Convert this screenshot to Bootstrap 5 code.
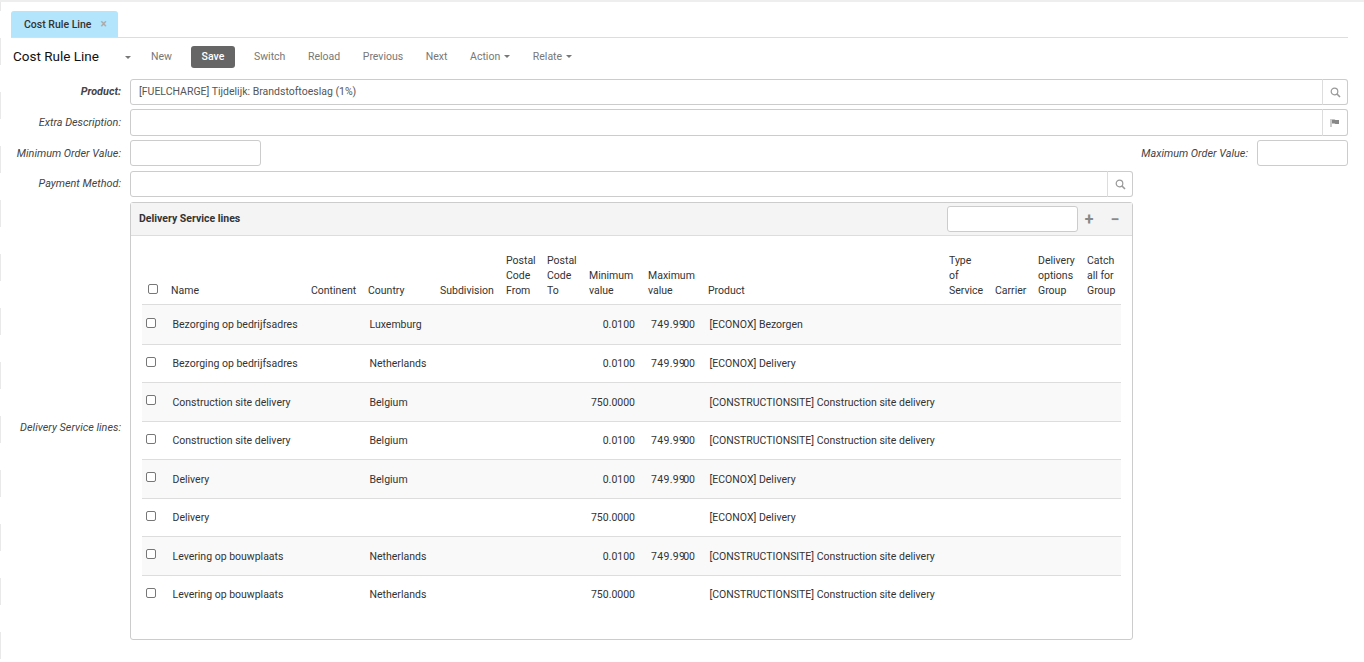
<!DOCTYPE html>
<html lang="en">
<head>
  <meta charset="UTF-8">
  <title>Cost Rule Line</title>
  <link href="https://cdn.jsdelivr.net/npm/bootstrap@5.3.0/dist/css/bootstrap.min.css" rel="stylesheet">
  <style>
    html { background: #fff; }
    body {
      background: linear-gradient(#e9e9e9 0, #e9e9e9 27px, transparent 27px) 0 38px / 1px 54px repeat-y;
      color: #333;
      font-family: Roboto, "Liberation Sans", sans-serif;
      font-size: 10.5px;
      line-height: 15px;
      min-height: 662px;
      overflow: hidden;
    }
    .top-rule { height: 2px; background: #eee; }
    .page-wrap { padding: 9px 16px 0 11px; }

    .tab-strip { border-bottom: 1px solid #ddd; height: 27px; }
    .tab-item {
      width: 107px;
      height: 26px;
      background: #b3e5fc;
      border-radius: 3px 3px 0 0;
      font-weight: 500;
      padding-left: 13px;
      color: #333;
    }
    .tab-close { color: #aaa; margin-left: 9px; font-size: 12px; }

    .tool-row { height: 30px; padding-top: 8px; margin-bottom: 11px; }
    .tool-title { font-size: 13.5px; color: #111; margin-left: 2px; width: 112px; padding-bottom: 2px; }
    .tool-caret {
      display: inline-block;
      width: 0; height: 0;
      border-left: 3px solid transparent;
      border-right: 3px solid transparent;
      border-top: 3px solid #777;
    }
    .tool-item { color: #777; white-space: nowrap; margin-left: 22.6px; padding-bottom: 2px; }
    .tool-item .tool-caret { margin-left: 4px; vertical-align: middle; }
    .tool-new { margin-left: 20px; }
    .tool-save {
      background: #666;
      color: #fff;
      font-weight: 500;
      width: 44px;
      height: 22px;
      border-radius: 3px;
      line-height: 22px;
      text-align: center;
      margin-left: 19px;
    }
    .tool-after-save { margin-left: 19px; }

    .field-row { margin-bottom: 4px; }
    .field-row-wide { margin-bottom: 5px; }
    .field-label {
      width: 110px;
      margin-right: 9px;
      padding-bottom: 1px;
      flex: none;
      text-align: right;
      font-size: 10.85px;
      font-style: italic;
      color: #444;
      white-space: nowrap;
    }
    .field-label-auto { width: auto; }
    .label-low { padding-bottom: 0; padding-top: 1px; }
    .field-box {
      height: 26px;
      min-height: 0;
      border: 1px solid #ccc;
      border-radius: 3px;
      padding: 0 8px 2px;
      font-size: 10.5px;
      color: #555;
      background: #fff;
      box-shadow: none;
    }
    .field-tall .field-box, .field-tall .addon-box { height: 27px; }
    .field-min { width: 131px; flex: none; }
    .field-max { width: 91px; flex: none; }
    .field-wrap { width: 1003px; }
    .addon-box {
      width: 26px;
      height: 26px;
      border: 1px solid #ccc;
      border-left: 1px solid #ddd;
      border-radius: 0 3px 3px 0;
      background: #fff;
      margin-left: -1px;
      flex: none;
    }
    .join-left { border-radius: 3px 0 0 3px; }

    .lines-label { padding-top: 14px; }
    .lines-panel {
      width: 1003px;
      height: 438px;
      border: 1px solid #ccc;
      border-radius: 3px;
    }
    .lines-head {
      height: 33px;
      background: #f4f4f4;
      border-bottom: 1px solid #ddd;
      padding: 0 4px 0 8px;
      font-weight: 700;
    }
    .lines-head-title { padding-bottom: 2px; }
    .lines-search {
      width: 131px;
      height: 26px;
      border: 1px solid #ccc;
      border-radius: 3px;
      background: #fff;
      margin-left: auto;
      margin-right: -2px;
    }
    .head-act { width: 26px; text-align: center; color: #888; font-size: 16px; font-weight: 700; }

    .lines-body { padding: 17px 11px 0; }
    .lines-table {
      table-layout: fixed;
      width: 979px;
      margin: 0;
      border-collapse: collapse;
      color: #333;
    }
    .lines-table col:nth-child(1) { width: 23px; }
    .lines-table col:nth-child(2) { width: 140px; }
    .lines-table col:nth-child(3) { width: 57px; }
    .lines-table col:nth-child(4) { width: 72px; }
    .lines-table col:nth-child(5) { width: 66px; }
    .lines-table col:nth-child(6) { width: 41px; }
    .lines-table col:nth-child(7) { width: 42px; }
    .lines-table col:nth-child(8) { width: 59px; }
    .lines-table col:nth-child(9) { width: 60px; }
    .lines-table col:nth-child(10) { width: 241px; }
    .lines-table col:nth-child(11) { width: 46px; }
    .lines-table col:nth-child(12) { width: 43px; }
    .lines-table col:nth-child(13) { width: 49px; }
    .lines-table col:nth-child(14) { width: 40px; }
    .lines-table th {
      font-weight: 400;
      padding: 0 0 6px 6px;
      vertical-align: bottom;
      border-bottom: 1px solid #ddd;
    }
    .lines-table td {
      padding: 0 0 0 7.5px;
      border-bottom: 1px solid #ddd;
      vertical-align: middle;
      white-space: nowrap;
    }
    .lines-table tr:nth-child(odd) td { background: #f9f9f9; }
    .lines-table tr:last-child td { border-bottom: 0; background: #fff; }
    .lines-table td.num { text-align: right; padding: 0 7px 0 0; }
    .lines-table td.check-col { padding-left: 4px; }
    .row-a { height: 40px; }
    .row-b { height: 38px; }
    .row-c { height: 39px; }
    .box-tick {
      display: block;
      width: 10px;
      height: 10px;
      border: 1px solid #777;
      border-radius: 2px;
      background: #fff;
      margin-bottom: 4px;
    }
    .stretch { letter-spacing: .3px; }
    .squeeze { margin-left: -2px; letter-spacing: 0; }
  </style>
</head>
<body>
  <div class="top-rule"></div>
  <div class="page-wrap">
    <!-- tab strip -->
    <div class="tab-strip">
      <div class="tab-item d-flex align-items-center">Cost Rule Line <span class="tab-close">&times;</span></div>
    </div>

    <!-- toolbar -->
    <div class="tool-row d-flex align-items-center">
      <div class="tool-title">Cost Rule Line</div>
      <span class="tool-caret"></span>
      <div class="tool-item tool-new">New</div>
      <div class="tool-save">Save</div>
      <div class="tool-item tool-after-save">Switch</div>
      <div class="tool-item">Reload</div>
      <div class="tool-item">Previous</div>
      <div class="tool-item">Next</div>
      <div class="tool-item">Action<span class="tool-caret"></span></div>
      <div class="tool-item">Relate<span class="tool-caret"></span></div>
    </div>

    <!-- form -->
    <div class="field-row d-flex align-items-center">
      <div class="field-label fw-bold">Product:</div>
      <input class="field-box join-left flex-grow-1 form-control" value="[FUELCHARGE] Tijdelijk: Brandstoftoeslag (1%)">
      <div class="addon-box d-flex align-items-center justify-content-center">
        <svg width="11" height="11" viewBox="0 0 11 11"><circle cx="4.500" cy="4.500" r="3.300" fill="none" stroke="#999" stroke-width="1.200"/><path d="M7 7L10 10" stroke="#999" stroke-width="1.600"/></svg>
      </div>
    </div>
    <div class="field-row field-tall d-flex align-items-center">
      <div class="field-label">Extra Description:</div>
      <input class="field-box join-left flex-grow-1 form-control">
      <div class="addon-box d-flex align-items-center justify-content-center">
        <svg width="10" height="10" viewBox="0 0 10 10"><path d="M1 1v8" stroke="#aaa" stroke-width="1.200"/><path d="M2 1.500h2.500l1 .6H9v4H5.500l-1-.6H2z" fill="#888"/></svg>
      </div>
    </div>
    <div class="field-row-wide d-flex align-items-center">
      <div class="field-label label-low">Minimum Order Value:</div>
      <input class="field-box field-min form-control">
      <div class="field-label label-low field-label-auto ms-auto">Maximum Order Value:</div>
      <input class="field-box field-max form-control">
    </div>
    <div class="field-row-wide d-flex align-items-center">
      <div class="field-label">Payment Method:</div>
      <div class="field-wrap d-flex">
        <input class="field-box join-left flex-grow-1 form-control">
        <div class="addon-box d-flex align-items-center justify-content-center">
          <svg width="11" height="11" viewBox="0 0 11 11"><circle cx="4.500" cy="4.500" r="3.300" fill="none" stroke="#999" stroke-width="1.200"/><path d="M7 7L10 10" stroke="#999" stroke-width="1.600"/></svg>
        </div>
      </div>
    </div>

    <div class="d-flex align-items-center">
      <div class="field-label lines-label">Delivery Service lines:</div>
      <div class="lines-panel">
        <div class="lines-head d-flex align-items-center">
          <span class="lines-head-title">Delivery Service lines</span>
          <div class="lines-search"></div>
          <div class="head-act">+</div>
          <div class="head-act">&minus;</div>
        </div>
        <div class="lines-body">
          <table class="lines-table">
            <colgroup>
              <col><col><col><col><col><col><col><col><col><col><col><col><col><col>
            </colgroup>
            <thead>
              <tr>
                <th><span class="box-tick"></span></th>
                <th>Name</th><th>Continent</th><th>Country</th><th>Subdivision</th>
                <th>Postal<br>Code<br>From</th><th>Postal<br>Code<br>To</th><th>Minimum<br>value</th><th>Maximum<br>value</th>
                <th>Product</th><th>Type<br>of<br>Service</th><th>Carrier</th><th>Delivery<br>options<br>Group</th><th>Catch<br>all for<br>Group</th>
              </tr>
            </thead>
            <tbody>
              <tr class="row-a"><td class="check-col"><span class="box-tick"></span></td><td>Bezorging op bedrijfsadres</td><td></td><td>Luxemburg</td><td></td><td></td><td></td><td class="num">0.0100</td><td class="num stretch">749.99<span class="squeeze">00</span></td><td>[ECONOX] Bezorgen</td><td></td><td></td><td></td><td></td></tr>
              <tr class="row-b"><td class="check-col"><span class="box-tick"></span></td><td>Bezorging op bedrijfsadres</td><td></td><td>Netherlands</td><td></td><td></td><td></td><td class="num">0.0100</td><td class="num stretch">749.99<span class="squeeze">00</span></td><td>[ECONOX] Delivery</td><td></td><td></td><td></td><td></td></tr>
              <tr class="row-c"><td class="check-col"><span class="box-tick"></span></td><td>Construction site delivery</td><td></td><td>Belgium</td><td></td><td></td><td></td><td class="num">750.0000</td><td></td><td>[CONSTRUCTIONSITE] Construction site delivery</td><td></td><td></td><td></td><td></td></tr>
              <tr class="row-b"><td class="check-col"><span class="box-tick"></span></td><td>Construction site delivery</td><td></td><td>Belgium</td><td></td><td></td><td></td><td class="num">0.0100</td><td class="num stretch">749.99<span class="squeeze">00</span></td><td>[CONSTRUCTIONSITE] Construction site delivery</td><td></td><td></td><td></td><td></td></tr>
              <tr class="row-c"><td class="check-col"><span class="box-tick"></span></td><td>Delivery</td><td></td><td>Belgium</td><td></td><td></td><td></td><td class="num">0.0100</td><td class="num stretch">749.99<span class="squeeze">00</span></td><td>[ECONOX] Delivery</td><td></td><td></td><td></td><td></td></tr>
              <tr class="row-b"><td class="check-col"><span class="box-tick"></span></td><td>Delivery</td><td></td><td></td><td></td><td></td><td></td><td class="num">750.0000</td><td></td><td>[ECONOX] Delivery</td><td></td><td></td><td></td><td></td></tr>
              <tr class="row-c"><td class="check-col"><span class="box-tick"></span></td><td>Levering op bouwplaats</td><td></td><td>Netherlands</td><td></td><td></td><td></td><td class="num">0.0100</td><td class="num stretch">749.99<span class="squeeze">00</span></td><td>[CONSTRUCTIONSITE] Construction site delivery</td><td></td><td></td><td></td><td></td></tr>
              <tr class="row-b"><td class="check-col"><span class="box-tick"></span></td><td>Levering op bouwplaats</td><td></td><td>Netherlands</td><td></td><td></td><td></td><td class="num">750.0000</td><td></td><td>[CONSTRUCTIONSITE] Construction site delivery</td><td></td><td></td><td></td><td></td></tr>
            </tbody>
          </table>
        </div>
      </div>
    </div>
  </div>
  <script src="https://cdn.jsdelivr.net/npm/bootstrap@5.3.0/dist/js/bootstrap.bundle.min.js"></script>
</body>
</html>
